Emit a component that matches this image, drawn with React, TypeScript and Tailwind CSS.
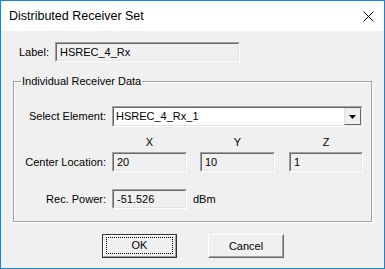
import type { ReactNode } from 'react'

function Sunken({ w, h, white, children }: { w: string; h: string; white?: boolean; children?: ReactNode }) {
  return (
    <div className={`${w} ${h} border border-t-[#a0a0a0] border-l-[#a0a0a0] border-b-white border-r-white`}>
      <div
        className={`flex h-full items-center border border-t-[#696969] border-l-[#696969] border-b-[#e3e3e3] border-r-[#e3e3e3] ${
          white ? 'bg-white' : 'bg-[#f0f0f0]'
        }`}
      >
        {children}
      </div>
    </div>
  )
}

function Field({ w, value }: { w: string; value: string }) {
  return (
    <Sunken w={w} h="h-[20px]">
      <span className="pl-[3px] leading-none text-black">{value}</span>
    </Sunken>
  )
}

export default function App() {
  return (
    <div className="flex h-[269px] w-[385px] flex-col border border-[#1883d7] bg-[#f0f0f0] font-['Liberation_Sans',Arial,sans-serif] text-[11px] text-black">
      {/* title bar */}
      <div className="flex h-[30px] shrink-0 items-center justify-between bg-white pl-[8px] pr-[10px]">
        <span className="text-[12.5px]">Distributed Receiver Set</span>
        <svg width="11" height="11" viewBox="0 0 11 11" className="mt-[1px]">
          <path d="M0.5 0.5 L10.5 10.5 M10.5 0.5 L0.5 10.5" stroke="#000" strokeWidth="1" fill="none" />
        </svg>
      </div>

      {/* label row */}
      <div className="mt-[11px] flex items-center">
        <span className="ml-[18px] w-[36px]">Label:</span>
        <Field w="w-[185px]" value="HSREC_4_Rx" />
      </div>

      {/* group box */}
      <div className="relative ml-[12px] mt-[19px] h-[141px] w-[359px] border border-[#a0a0a0] shadow-[inset_1px_1px_0_#fff,1px_1px_0_#fff]">
        <span className="absolute -top-[7px] left-[7px] bg-[#f0f0f0] px-[1px] leading-[13px]">Individual Receiver Data</span>

        <div className="mt-[24px] flex items-center">
          <span className="w-[92px] text-right">Select Element:</span>
          <div className="ml-[6px]">
            <Sunken w="w-[251px]" h="h-[21px]" white>
              <span className="flex-1 pl-[2px] leading-none">HSREC_4_Rx_1</span>
              <div className="flex h-full w-[17px] items-center justify-center border border-t-[#e3e3e3] border-l-[#e3e3e3] border-b-[#696969] border-r-[#696969] bg-[#f0f0f0]">
                <svg width="7" height="4" viewBox="0 0 7 4">
                  <path d="M0 0 H7 L3.5 4 Z" fill="#000" />
                </svg>
              </div>
            </Sunken>
          </div>
        </div>

        <div className="mt-[7px] flex h-[16px] items-center">
          <div className="ml-[98px] w-[75px] text-center">X</div>
          <div className="ml-[13px] w-[75px] text-center">Y</div>
          <div className="ml-[14px] w-[74px] text-center">Z</div>
        </div>

        <div className="mt-[2px] flex items-center">
          <span className="w-[92px] text-right">Center Location:</span>
          <div className="ml-[6px]">
            <Field w="w-[75px]" value="20" />
          </div>
          <div className="ml-[13px]">
            <Field w="w-[75px]" value="10" />
          </div>
          <div className="ml-[14px]">
            <Field w="w-[74px]" value="1" />
          </div>
        </div>

        <div className="mt-[17px] flex items-center">
          <span className="w-[92px] text-right">Rec. Power:</span>
          <div className="ml-[6px]">
            <Field w="w-[75px]" value="-51.526" />
          </div>
          <span className="ml-[6px]">dBm</span>
        </div>
      </div>

      {/* buttons */}
      <div className="mt-[12px] flex">
        <button className="ml-[101px] h-[24px] w-[75px] border border-[#333] bg-[#f0f0f0] p-0">
          <div className="flex h-full items-center justify-center border border-t-white border-l-white border-b-[#a0a0a0] border-r-[#a0a0a0] px-[2px] pt-[1px] pb-[2px]">
            <div className="flex h-full w-full items-center justify-center border border-dotted border-black">OK</div>
          </div>
        </button>
        <button className="ml-[31px] h-[24px] w-[76px] border border-t-white border-l-white border-b-[#696969] border-r-[#696969] bg-[#f0f0f0] p-0">
          <div className="flex h-full items-center justify-center border border-t-[#f0f0f0] border-l-[#f0f0f0] border-b-[#a0a0a0] border-r-[#a0a0a0]">
            Cancel
          </div>
        </button>
      </div>
    </div>
  )
}
